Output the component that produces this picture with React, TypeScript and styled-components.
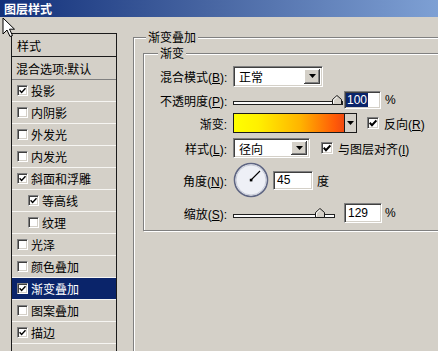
import React from 'react';
import styled, { createGlobalStyle } from 'styled-components';

const GlobalStyle = createGlobalStyle`
  html, body { margin: 0; padding: 0; background: #d4d0c8; }
  body {
    font-family: "Liberation Sans", "Noto Sans CJK SC", sans-serif;
    font-size: 12px;
    color: #000;
  }
  u { text-decoration: underline; text-underline-offset: 1px; }
`;

const Window = styled.div`
  position: relative;
  width: 438px;
  height: 351px;
  overflow: hidden;
  background: #d4d0c8;
  display: flex;
  flex-direction: column;
`;

const TitleBar = styled.div`
  flex: none;
  height: 17px;
  padding-left: 4px;
  background: linear-gradient(to right, #12307a 0%, #4a68a4 50%, #7ea0d4 100%);
  color: #fff;
  font-weight: bold;
  font-size: 12px;
  line-height: 17px;
  font-family: "Noto Sans CJK SC", sans-serif;
`;

const Body = styled.div`
  display: flex;
  align-items: flex-start;
  padding: 16px 0 0 11px;
`;

/* ---------- left list ---------- */
const StyleList = styled.div`
  flex: none;
  width: 106px;
  display: flex;
  flex-direction: column;
`;

const ListHeader = styled.div`
  height: 22px;
  border: 1px solid #1a1a1a;
  display: flex;
  align-items: center;
  padding-left: 5px;
`;

const ListBody = styled.div`
  height: 320px;
  border-left: 1px solid #1a1a1a;
  border-right: 1px solid #1a1a1a;
  display: flex;
  flex-direction: column;
`;

const BlendRow = styled.div`
  height: 22px;
  border-bottom: 1px solid #808080;
  display: flex;
  align-items: center;
  padding-left: 4px;
  white-space: nowrap;
`;

const LayerRow = styled.div<{ $indent?: boolean; $selected?: boolean }>`
  flex: none;
  height: 21px;
  border-bottom: 1px solid #f6f5f2;
  display: flex;
  align-items: center;
  gap: 3px;
  padding-left: ${(p) => (p.$indent ? 16 : 5)}px;
  background: ${(p) => (p.$selected ? '#0a246a' : 'transparent')};
  color: ${(p) => (p.$selected ? '#fff' : '#000')};
  white-space: nowrap;
`;

const CheckFrame = styled.span<{ $size: number }>`
  flex: none;
  width: ${(p) => p.$size}px;
  height: ${(p) => p.$size}px;
  box-sizing: border-box;
  background: #fff;
  border: 1px solid;
  border-color: #808080 #ffffff #ffffff #808080;
  box-shadow: inset 1px 1px 0 #404040, inset -1px -1px 0 #d4d0c8;
  display: flex;
  align-items: center;
  justify-content: center;
`;

function CheckBox({ checked, size = 11, bold }: { checked?: boolean; size?: number; bold?: boolean }) {
  return (
    <CheckFrame $size={size}>
      {checked && (
        <svg width={size - 4} height={size - 4} viewBox="0 0 7 7">
          <path d="M0.6 3.3 L2.6 5.4 L6.5 1.2" fill="none" stroke="#000" strokeWidth={bold ? 1.8 : 1.4} />
        </svg>
      )}
    </CheckFrame>
  );
}

/* ---------- right groups ---------- */
const Group = styled.div<{ $w: number; $h: number; $pl: number; $pt: number }>`
  position: relative;
  box-sizing: border-box;
  width: ${(p) => p.$w}px;
  height: ${(p) => p.$h}px;
  padding: ${(p) => p.$pt}px 0 0 ${(p) => p.$pl}px;
  border: 1px solid #808080;
  box-shadow: inset 1px 1px 0 #fff, 1px 1px 0 #fff;
  flex: none;
`;

const GroupTitle = styled.span<{ $left: number }>`
  position: absolute;
  top: -9px;
  left: ${(p) => p.$left}px;
  padding: 0 2px;
  background: #d4d0c8;
  line-height: 16px;
  white-space: nowrap;
`;

const RightColumn = styled.div`
  margin: 4px 0 0 16px;
  display: flex;
`;

const FormRow = styled.div<{ $h: number; $mt: number }>`
  display: grid;
  grid-template-columns: 67px auto;
  column-gap: 6px;
  align-items: center;
  height: ${(p) => p.$h}px;
  margin-top: ${(p) => p.$mt}px;
`;

const Label = styled.span`
  text-align: right;
  white-space: nowrap;
`;

const Controls = styled.div`
  display: flex;
  align-items: center;
  white-space: nowrap;
`;

const Sunken = styled.div<{ $w: number; $h: number; $ml?: number }>`
  box-sizing: border-box;
  width: ${(p) => p.$w}px;
  height: ${(p) => p.$h}px;
  margin-left: ${(p) => p.$ml ?? 0}px;
  background: #fff;
  border: 1px solid;
  border-color: #808080 #ffffff #ffffff #808080;
  box-shadow: inset 1px 1px 0 #404040, inset -1px -1px 0 #d4d0c8;
  display: flex;
  align-items: center;
  flex: none;
`;

const SelectText = styled.span`
  flex: 1;
  padding-left: 5px;
  font-family: "Noto Sans CJK SC", sans-serif;
`;

const DropButton = styled.span<{ $w: number }>`
  box-sizing: border-box;
  width: ${(p) => p.$w}px;
  align-self: stretch;
  margin: 2px 2px 2px 0;
  background: #d4d0c8;
  box-shadow: inset -1px -1px 0 #404040, inset 1px 1px 0 #ffffff, inset -2px -2px 0 #808080;
  display: flex;
  align-items: center;
  justify-content: center;
`;

function Arrow() {
  return (
    <svg width="7" height="4" viewBox="0 0 7 4">
      <polygon points="0,0 7,0 3.5,4" fill="#000" />
    </svg>
  );
}

const InputText = styled.span<{ $pl: number }>`
  padding-left: ${(p) => p.$pl}px;
  line-height: 14px;
`;

const Selection = styled.span`
  background: #0a246a;
  color: #fff;
  padding: 0 1px;
`;

const Unit = styled.span<{ $ml: number }>`
  margin-left: ${(p) => p.$ml}px;
`;

const SliderBox = styled.div<{ $w: number }>`
  position: relative;
  width: ${(p) => p.$w}px;
  height: 10px;
  flex: none;
  display: flex;
  align-items: flex-end;
`;

const Track = styled.div`
  box-sizing: border-box;
  width: 100%;
  height: 4px;
  background: #fbfbfb;
  border: 1px solid #202020;
`;

const Thumb = styled.svg`
  position: absolute;
  bottom: 0;
`;

function Slider({ width, pos }: { width: number; pos: number }) {
  return (
    <SliderBox $w={width}>
      <Track />
      <Thumb width="10" height="10" viewBox="0 0 10 10" style={{ left: pos }}>
        <polygon points="0.5,9.5 0.5,4.5 5,0.5 9.5,4.5 9.5,9.5" fill="#d4d0c8" stroke="#1a1a1a" strokeWidth="1" />
        <polyline points="1.5,8.5 1.5,5 5,1.8" fill="none" stroke="#fff" strokeWidth="1" />
      </Thumb>
    </SliderBox>
  );
}

const GradientPicker = styled.div`
  box-sizing: border-box;
  width: 124px;
  height: 20px;
  border: 1px solid #1a1a1a;
  display: flex;
  flex: none;
`;

const Swatch = styled.div`
  flex: 1;
  background: linear-gradient(to right, #ffff00 0%, #fff000 22%, #ffb400 60%, #ff5a08 92%, #f04a10 100%);
`;

const SwatchButton = styled.div`
  width: 11px;
  background: #d4d0c8;
  border-left: 1px solid #1a1a1a;
  display: flex;
  align-items: center;
  justify-content: center;
`;

const CheckLabel = styled.label<{ $ml: number }>`
  display: flex;
  align-items: center;
  gap: 5px;
  margin-left: ${(p) => p.$ml}px;
`;

function Dial() {
  return (
    <svg width="36" height="36" viewBox="0 0 36 36" style={{ flex: 'none' }}>
      <circle cx="18" cy="18" r="16.5" fill="#eef0f6" stroke="#5e6582" strokeWidth="1.6" />
      <circle cx="18" cy="18" r="15" fill="none" stroke="#c8ccd8" strokeWidth="1" />
      <line x1="18" y1="18" x2="27" y2="9" stroke="#000" strokeWidth="1.1" />
      <rect x="16.8" y="16.8" width="2.6" height="2.6" fill="#000" />
    </svg>
  );
}

const Cursor = styled.svg`
  position: absolute;
  left: 2px;
  top: 17px;
`;

const layers: { name: string; checked: boolean; indent?: boolean; selected?: boolean }[] = [
  { name: '投影', checked: true },
  { name: '内阴影', checked: false },
  { name: '外发光', checked: false },
  { name: '内发光', checked: false },
  { name: '斜面和浮雕', checked: true },
  { name: '等高线', checked: true, indent: true },
  { name: '纹理', checked: false, indent: true },
  { name: '光泽', checked: false },
  { name: '颜色叠加', checked: false },
  { name: '渐变叠加', checked: true, selected: true },
  { name: '图案叠加', checked: false },
  { name: '描边', checked: true },
  { name: '', checked: false },
];

const CjkText = styled.span`
  font-family: "Noto Sans CJK SC", sans-serif;
`;

export default function App() {
  return (
    <>
      <GlobalStyle />
      <Window>
        <TitleBar>图层样式</TitleBar>
        <Body>
          <StyleList>
            <ListHeader>
              <CjkText>样式</CjkText>
            </ListHeader>
            <ListBody>
              <BlendRow>
                <CjkText>混合选项:默认</CjkText>
              </BlendRow>
              {layers.map((l, i) => (
                <LayerRow key={i} $indent={l.indent} $selected={l.selected}>
                  {l.name && <CheckBox checked={l.checked} />}
                  <CjkText>{l.name}</CjkText>
                </LayerRow>
              ))}
            </ListBody>
          </StyleList>

          <RightColumn>
            <Group $w={330} $h={340} $pl={9} $pt={15}>
              <GroupTitle $left={12}>
                <CjkText>渐变叠加</CjkText>
              </GroupTitle>
              <Group $w={310} $h={178} $pl={16} $pt={11}>
                <GroupTitle $left={14}>
                  <CjkText>渐变</CjkText>
                </GroupTitle>

                <FormRow $h={22} $mt={0}>
                  <Label>
                    <CjkText>混合模式</CjkText>(<u>B</u>):
                  </Label>
                  <Controls>
                    <Sunken $w={90} $h={21}>
                      <SelectText>正常</SelectText>
                      <DropButton $w={16}>
                        <Arrow />
                      </DropButton>
                    </Sunken>
                  </Controls>
                </FormRow>

                <FormRow $h={20} $mt={3}>
                  <Label>
                    <CjkText>不透明度</CjkText>(<u>P</u>):
                  </Label>
                  <Controls>
                    <Slider width={110} pos={99} />
                    <Sunken $w={37} $h={18} $ml={1}>
                      <InputText $pl={1}>
                        <Selection>100</Selection>
                      </InputText>
                    </Sunken>
                    <Unit $ml={4}>%</Unit>
                  </Controls>
                </FormRow>

                <FormRow $h={22} $mt={2}>
                  <Label>
                    <CjkText>渐变</CjkText>:
                  </Label>
                  <Controls>
                    <GradientPicker>
                      <Swatch />
                      <SwatchButton>
                        <Arrow />
                      </SwatchButton>
                    </GradientPicker>
                    <CheckLabel $ml={10}>
                      <CheckBox checked size={12} bold />
                      <span>
                        <CjkText>反向</CjkText>(<u>R</u>)
                      </span>
                    </CheckLabel>
                  </Controls>
                </FormRow>

                <FormRow $h={20} $mt={4}>
                  <Label>
                    <CjkText>样式</CjkText>(<u>L</u>):
                  </Label>
                  <Controls>
                    <Sunken $w={77} $h={20}>
                      <SelectText>径向</SelectText>
                      <DropButton $w={16}>
                        <Arrow />
                      </DropButton>
                    </Sunken>
                    <CheckLabel $ml={11}>
                      <CheckBox checked size={12} bold />
                      <span>
                        <CjkText>与图层对齐</CjkText>(<u>I</u>)
                      </span>
                    </CheckLabel>
                  </Controls>
                </FormRow>

                <FormRow $h={36} $mt={4}>
                  <Label>
                    <CjkText>角度</CjkText>(<u>N</u>):
                  </Label>
                  <Controls>
                    <Dial />
                    <Sunken $w={40} $h={19} $ml={4}>
                      <InputText $pl={3}>45</InputText>
                    </Sunken>
                    <Unit $ml={4}>
                      <CjkText>度</CjkText>
                    </Unit>
                  </Controls>
                </FormRow>

                <FormRow $h={22} $mt={4}>
                  <Label>
                    <CjkText>缩放</CjkText>(<u>S</u>):
                  </Label>
                  <Controls>
                    <Slider width={102} pos={82} />
                    <Sunken $w={38} $h={20} $ml={9}>
                      <InputText $pl={3}>129</InputText>
                    </Sunken>
                    <Unit $ml={3}>%</Unit>
                  </Controls>
                </FormRow>
              </Group>
            </Group>
          </RightColumn>
        </Body>

        <Cursor width="13" height="21" viewBox="0 0 13 21">
          <path d="M1 1 L1 17 L5 13 L8 19.5 L10.5 18.5 L7.5 12.2 L12.5 12.2 Z" fill="#fff" stroke="#000" strokeWidth="1" strokeLinejoin="miter" />
        </Cursor>
      </Window>
    </>
  );
}
